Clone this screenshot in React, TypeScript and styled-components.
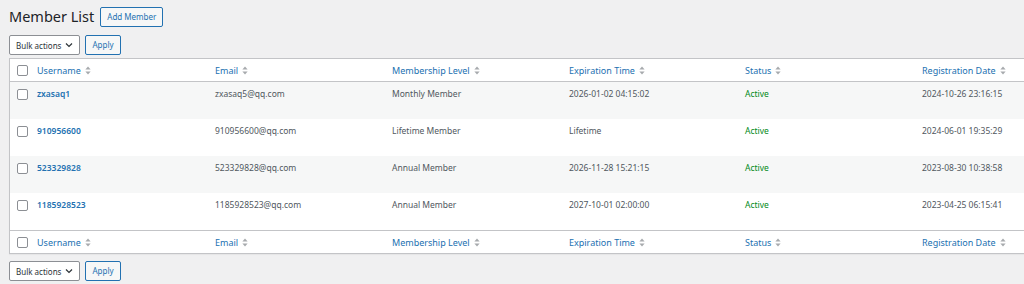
import { styled, createGlobalStyle } from 'styled-components';

const GlobalStyle = createGlobalStyle`
  html, body {
    margin: 0;
    padding: 0;
    background: #f0f0f1;
    overflow: hidden;
  }
  body {
    font-family: "Noto Sans", "Open Sans", sans-serif;
    color: #3c434a;
  }
`;

type Member = {
  username: string;
  email: string;
  level: string;
  expires: string;
  status: string;
  registered: string;
};

const members: Member[] = [
  { username: 'zxasaq1', email: 'zxasaq5@qq.com', level: 'Monthly Member', expires: '2026-01-02 04:15:02', status: 'Active', registered: '2024-10-26 23:16:15' },
  { username: '910956600', email: '910956600@qq.com', level: 'Lifetime Member', expires: 'Lifetime', status: 'Active', registered: '2024-06-01 19:35:29' },
  { username: '523329828', email: '523329828@qq.com', level: 'Annual Member', expires: '2026-11-28 15:21:15', status: 'Active', registered: '2023-08-30 10:38:58' },
  { username: '1185928523', email: '1185928523@qq.com', level: 'Annual Member', expires: '2027-10-01 02:00:00', status: 'Active', registered: '2023-04-25 06:15:41' },
];

const columns = ['Username', 'Email', 'Membership Level', 'Expiration Time', 'Status', 'Registration Date'];

const SortIcon = () => (
  <svg width="6" height="9" viewBox="0 0 6 9">
    <path d="M3 0.5 L5.6 3.6 H0.4 Z" fill="#a7aaad" />
    <path d="M3 8.5 L5.6 5.4 H0.4 Z" fill="#a7aaad" />
  </svg>
);

const ChevronIcon = () => (
  <svg width="8" height="6" viewBox="0 0 8 6">
    <path d="M1 1.5 L4 4.5 L7 1.5" fill="none" stroke="#2c3338" strokeWidth="1.2" />
  </svg>
);

const BulkBar = ({ bottom }: { bottom?: boolean }) => (
  <TableNav $bottom={bottom}>
    <Select>
      Bulk actions <ChevronIcon />
    </Select>
    <Button>Apply</Button>
  </TableNav>
);

const HeadRow = ({ foot }: { foot?: boolean }) => (
  <tr>
    <CheckCell $head $foot={foot}>
      <Checkbox />
    </CheckCell>
    {columns.map((c) => (
      <HeadCell key={c} $foot={foot}>
        <HeadLink>
          {c} <SortIcon />
        </HeadLink>
      </HeadCell>
    ))}
  </tr>
);

const App = () => {
  return (
    <Page>
      <GlobalStyle />
      <TitleRow>
        <Title>Member List</Title>
        <Button>Add Member</Button>
      </TitleRow>
      <BulkBar />
      <Table>
        <colgroup>
          <col style={{ width: 19 }} />
          <col style={{ width: 178 }} />
          <col style={{ width: 177 }} />
          <col style={{ width: 177 }} />
          <col style={{ width: 176 }} />
          <col style={{ width: 177 }} />
          <col />
        </colgroup>
        <thead>
          <HeadRow />
        </thead>
        <tbody>
          {members.map((m, i) => (
            <Row key={m.username} $alt={i % 2 === 0}>
              <CheckCell>
                <Checkbox />
              </CheckCell>
              <Cell>
                <UserLink>{m.username}</UserLink>
              </Cell>
              <Cell>{m.email}</Cell>
              <Cell>{m.level}</Cell>
              <Cell>{m.expires}</Cell>
              <Cell>
                <Status>{m.status}</Status>
              </Cell>
              <Cell>{m.registered}</Cell>
            </Row>
          ))}
        </tbody>
        <tfoot>
          <HeadRow foot />
        </tfoot>
      </Table>
      <BulkBar bottom />
    </Page>
  );
};

export default App;

const Page = styled.div`
  padding: 7px 0 0 9px;
  width: 1040px;
`;

const TitleRow = styled.div`
  display: flex;
  align-items: center;
  gap: 6px;
  height: 19px;
`;

const Title = styled.h1`
  margin: 0;
  font-size: 14.5px;
  font-weight: 400;
  color: #1d2327;
  line-height: 19px;
`;

const Button = styled.button`
  height: 20px;
  padding: 0 6px;
  font-family: inherit;
  font-size: 8px;
  color: #2271b1;
  background: #f6f7f7;
  border: 1px solid #2271b1;
  border-radius: 2px;
  line-height: 18px;
`;

const TableNav = styled.div<{ $bottom?: boolean }>`
  display: flex;
  align-items: center;
  gap: 5px;
  height: 20px;
  margin: ${(p) => (p.$bottom ? '7px 0 0' : '9px 0 3px')};
`;

const Select = styled.div`
  box-sizing: border-box;
  height: 20px;
  display: flex;
  align-items: center;
  gap: 4px;
  padding: 0 6px 0 6px;
  font-size: 8px;
  color: #2c3338;
  background: #fff;
  border: 1px solid #8c8f94;
  border-radius: 2px;
`;

const Table = styled.table`
  width: 1030px;
  table-layout: fixed;
  border-collapse: separate;
  border-spacing: 0;
  background: #fff;
  border: 1px solid #c3c4c7;
  box-shadow: 0 1px 1px rgba(0, 0, 0, 0.04);
  font-size: 8.5px;
`;

const HeadCell = styled.th<{ $foot?: boolean }>`
  text-align: left;
  font-weight: 400;
  height: 22px;
  padding: 0 8px;
  ${(p) => (p.$foot ? 'border-top: 1px solid #c3c4c7;' : 'border-bottom: 1px solid #c3c4c7;')}
`;

const HeadLink = styled.span`
  display: inline-flex;
  align-items: center;
  gap: 4px;
  color: #2271b1;
  font-size: 9px;
`;

const CheckCell = styled.td<{ $head?: boolean; $foot?: boolean }>`
  padding: ${(p) => (p.$head ? '0' : '7px')} 0 0 7px;
  vertical-align: ${(p) => (p.$head ? 'middle' : 'top')};
  ${(p) => (p.$head && !p.$foot ? 'border-bottom: 1px solid #c3c4c7;' : '')}
  ${(p) => (p.$foot ? 'border-top: 1px solid #c3c4c7;' : '')}
`;

const Checkbox = styled.span`
  display: block;
  box-sizing: border-box;
  width: 11px;
  height: 11px;
  background: #fff;
  border: 1px solid #8c8f94;
  border-radius: 2px;
`;

const Row = styled.tr<{ $alt: boolean }>`
  height: 37px;
  background: ${(p) => (p.$alt ? '#f6f7f7' : '#fff')};
`;

const Cell = styled.td`
  vertical-align: top;
  padding: 6px 8px 0;
  color: #50575e;
  line-height: 12px;
`;

const UserLink = styled.span`
  color: #2271b1;
  font-weight: 600;
`;

const Status = styled.span`
  color: #008a20;
`;
